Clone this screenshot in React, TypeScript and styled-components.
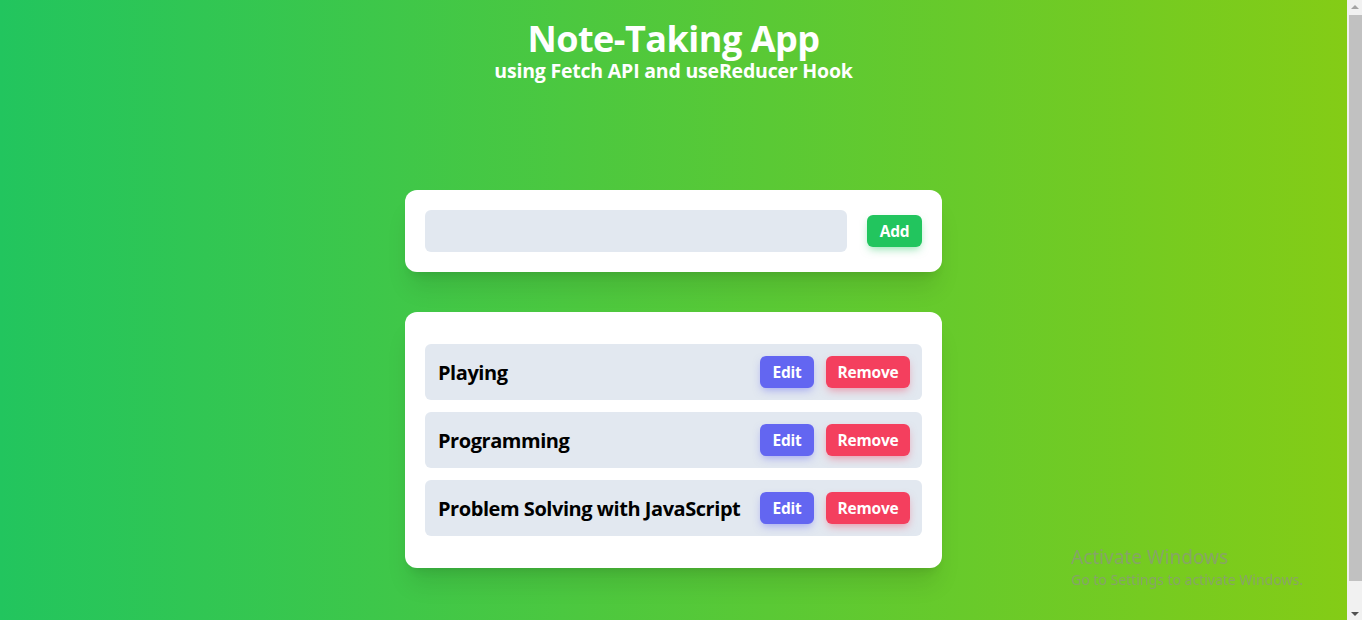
import React, { useReducer, useState } from "react";
import styled, { createGlobalStyle } from "styled-components";

const GlobalStyle = createGlobalStyle`
  html, body { margin: 0; padding: 0; height: 100%; overflow: hidden; }
  body {
    font-family: "Open Sans", "Noto Sans", sans-serif;
  }
  #root { height: 100%; }
  * { box-sizing: border-box; }
`;

const Shell = styled.div`
  display: flex;
  height: 100vh;
`;

const Page = styled.main`
  flex: 1;
  min-width: 0;
  display: flex;
  flex-direction: column;
  align-items: center;
  padding-top: 19px;
  background: linear-gradient(to right, #22c55e, #84cc16);
  overflow: hidden;
`;

const ScrollBar = styled.div`
  width: 15px;
  background: #f1f1f1;
  display: flex;
  flex-direction: column;
`;

const ArrowBox = styled.div`
  height: 15px;
  display: flex;
  justify-content: center;
  align-items: center;
`;

const Arrow = styled.div<{ $dir: "up" | "down" }>`
  width: 0;
  height: 0;
  border-left: 4px solid transparent;
  border-right: 4px solid transparent;
  ${(p) =>
    p.$dir === "up"
      ? "border-bottom: 4px solid #a3a3a3; margin-top: -2px;"
      : "border-top: 4px solid #505050; margin-top: 2px;"}
`;

const Track = styled.div`
  flex: 1;
  padding: 0 0 0 2px;
`;

const Thumb = styled.div`
  height: 566px;
  background: #c1c1c1;
`;

const Header = styled.header`
  display: flex;
  flex-direction: column;
  align-items: center;
  color: #fff;
  margin-bottom: 107px;
`;

const Title = styled.h1`
  margin: 0;
  font-size: 36px;
  line-height: 40px;
  font-weight: 700;
  letter-spacing: -0.5px;
`;

const Subtitle = styled.h2`
  margin: 0;
  font-size: 19.5px;
  line-height: 24px;
  font-weight: 700;
  letter-spacing: -0.2px;
`;

const Card = styled.section<{ $py: number }>`
  width: 537px;
  background: #fff;
  border-radius: 12px;
  padding: ${(p) => p.$py}px 20px;
  box-shadow: 0 20px 25px -5px rgba(0, 0, 0, 0.1), 0 8px 10px -6px rgba(0, 0, 0, 0.1);
  margin-bottom: 40px;
`;

const Form = styled.form`
  display: flex;
  align-items: center;
  gap: 20px;
`;

const Input = styled.input`
  flex: 1;
  height: 42px;
  border: none;
  outline: none;
  border-radius: 6px;
  background: #e2e8f0;
  padding: 0 12px;
  font-size: 16px;
  font-family: inherit;
`;

const Button = styled.button<{ $color: string; $shadow: string; $w: number }>`
  width: ${(p) => p.$w}px;
  height: 32px;
  border: none;
  border-radius: 6px;
  background: ${(p) => p.$color};
  color: #fff;
  font-family: inherit;
  font-weight: 700;
  font-size: 15.5px;
  letter-spacing: -0.2px;
  cursor: pointer;
  box-shadow: 0 4px 8px -2px ${(p) => p.$shadow};
  padding: 0;
`;

const List = styled.ul`
  list-style: none;
  margin: 0;
  padding: 0;
  display: flex;
  flex-direction: column;
  gap: 12px;
`;

const Row = styled.li`
  height: 56px;
  background: #e2e8f0;
  border-radius: 6px;
  display: flex;
  align-items: center;
  padding: 0 12px 0 13px;
  gap: 12px;
`;

const NoteText = styled.span`
  flex: 1;
  font-size: 20px;
  font-weight: 700;
  color: #000;
  letter-spacing: -0.45px;
`;

const Watermark = styled.div`
  position: fixed;
  left: 1071px;
  top: 544px;
  color: rgba(140, 150, 130, 0.75);
  font-family: "Noto Sans", "Open Sans", sans-serif;
  pointer-events: none;
`;

const WmTitle = styled.div`
  font-size: 19px;
  line-height: 26px;
`;

const WmSub = styled.div`
  font-size: 14px;
  line-height: 20px;
`;

type Note = { id: number; text: string };
type Action = { type: "add"; text: string } | { type: "remove"; id: number };

function reducer(state: Note[], action: Action): Note[] {
  switch (action.type) {
    case "add":
      return [...state, { id: Date.now(), text: action.text }];
    case "remove":
      return state.filter((n) => n.id !== action.id);
    default:
      return state;
  }
}

export default function App() {
  const [notes, dispatch] = useReducer(reducer, [
    { id: 1, text: "Playing" },
    { id: 2, text: "Programming" },
    { id: 3, text: "Problem Solving with JavaScript" },
  ]);
  const [value, setValue] = useState("");

  return (
    <>
      <GlobalStyle />
      <Shell>
        <Page>
          <Header>
            <Title>Note-Taking App</Title>
            <Subtitle>using Fetch API and useReducer Hook</Subtitle>
          </Header>
          <Card $py={20}>
            <Form
              onSubmit={(e) => {
                e.preventDefault();
                if (value.trim()) dispatch({ type: "add", text: value.trim() });
                setValue("");
              }}
            >
              <Input value={value} onChange={(e) => setValue(e.target.value)} />
              <Button type="submit" $color="#22c55e" $shadow="rgba(34,197,94,0.5)" $w={55}>
                Add
              </Button>
            </Form>
          </Card>
          <Card $py={32}>
            <List>
              {notes.map((n) => (
                <Row key={n.id}>
                  <NoteText>{n.text}</NoteText>
                  <Button $color="#6366f1" $shadow="rgba(99,102,241,0.5)" $w={54}>
                    Edit
                  </Button>
                  <Button
                    $color="#f43f5e"
                    $shadow="rgba(244,63,94,0.5)"
                    $w={84}
                    onClick={() => dispatch({ type: "remove", id: n.id })}
                  >
                    Remove
                  </Button>
                </Row>
              ))}
            </List>
          </Card>
        </Page>
        <ScrollBar>
          <ArrowBox>
            <Arrow $dir="up" />
          </ArrowBox>
          <Track>
            <Thumb />
          </Track>
          <ArrowBox>
            <Arrow $dir="down" />
          </ArrowBox>
        </ScrollBar>
      </Shell>
      <Watermark>
        <WmTitle>Activate Windows</WmTitle>
        <WmSub>Go to Settings to activate Windows.</WmSub>
      </Watermark>
    </>
  );
}
